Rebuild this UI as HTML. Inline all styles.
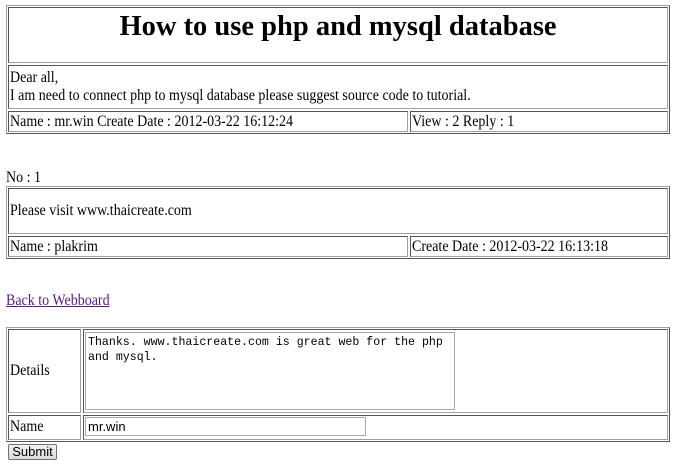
<!DOCTYPE html>
<html><head><style>
body{margin:0;width:681px;height:469px;background:#fff;font-family:"Liberation Serif",serif;font-size:16px;color:#000;position:relative;overflow:hidden}
.o{position:absolute;border:1px solid;border-color:#a0a0a0 #555 #555 #a0a0a0;box-sizing:border-box}
.c{position:absolute;border:1px solid;border-color:#555 #a0a0a0 #a0a0a0 #555;box-sizing:border-box;padding:0 1px;line-height:18px}
.t{position:absolute;white-space:nowrap;line-height:18px;transform:scaleX(0.875);transform-origin:0 0}
</style></head><body>
<div class="o" style="left:6px;top:5px;width:664px;height:129px"></div>
<div class="c" style="left:8px;top:7px;width:660px;height:56px"></div>
<div style="position:absolute;left:8px;width:660px;top:11px;text-align:center;font-weight:bold;font-size:28.5px;line-height:32px;white-space:nowrap">How to use php and mysql database</div>
<div class="c" style="left:8px;top:65px;width:660px;height:44px"></div>
<div class="t" style="left:10px;top:69px">Dear all,<br>I am need to connect php to mysql database please suggest source code to tutorial.</div>
<div class="c" style="left:8px;top:111px;width:400px;height:21px"></div>
<div class="t" style="left:10px;top:113px">Name : mr.win Create Date : 2012-03-22 16:12:24</div>
<div class="c" style="left:410px;top:111px;width:258px;height:21px"></div>
<div class="t" style="left:412px;top:113px">View : 2 Reply : 1</div>

<div class="t" style="left:6px;top:169px">No : 1</div>
<div class="o" style="left:6px;top:186px;width:664px;height:73px"></div>
<div class="c" style="left:8px;top:188px;width:660px;height:46px"></div>
<div class="t" style="left:10px;top:202px">Please visit www.thaicreate.com</div>
<div class="c" style="left:8px;top:236px;width:400px;height:21px"></div>
<div class="t" style="left:10px;top:238px">Name : plakrim</div>
<div class="c" style="left:410px;top:236px;width:258px;height:21px"></div>
<div class="t" style="left:412px;top:238px">Create Date : 2012-03-22 16:13:18</div>

<div class="t" style="left:6px;top:292px;color:#551a8b;text-decoration:underline">Back to Webboard</div>

<div class="o" style="left:6px;top:327px;width:664px;height:115px"></div>
<div class="c" style="left:8px;top:329px;width:73px;height:84px"></div>
<div class="t" style="left:10px;top:362px">Details</div>
<div class="c" style="left:83px;top:329px;width:585px;height:84px"></div>
<div style="position:absolute;left:85px;top:332px;width:370px;height:78px;border:1px solid #a9a9a9;box-sizing:border-box;font-family:'Liberation Mono',monospace;font-size:11.6px;line-height:15px;padding:2px 2px;white-space:pre">Thanks. www.thaicreate.com is great web for the php
and mysql.</div>
<div class="c" style="left:8px;top:415px;width:73px;height:25px"></div>
<div class="t" style="left:10px;top:418px">Name</div>
<div class="c" style="left:83px;top:415px;width:585px;height:25px"></div>
<div style="position:absolute;left:85px;top:417px;width:281px;height:19px;border:1px solid #a9a9a9;box-sizing:border-box;font-family:'Liberation Sans',sans-serif;font-size:13px;line-height:17px;padding:0 2px">mr.win</div>
<div style="position:absolute;left:8px;top:444px;width:49px;height:16px;border:1px solid #707070;border-radius:2px;box-sizing:border-box;background:linear-gradient(#f2f2f2,#dcdcdc);font-family:'Liberation Sans',sans-serif;font-size:13px;line-height:14px;text-align:center">Submit</div>
</body></html>
